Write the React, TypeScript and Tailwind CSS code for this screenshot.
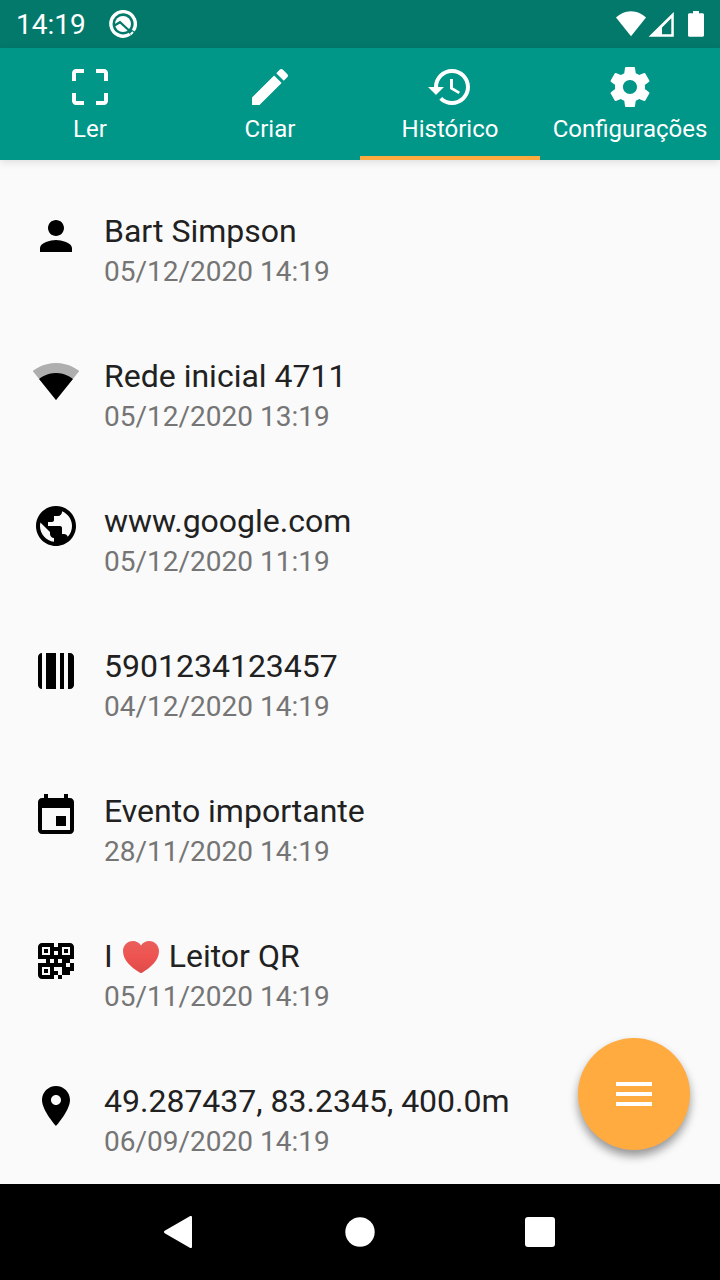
import { useState, type ReactNode } from "react";

const tabs = [
  {
    label: "Ler",
    path: "M3 5v4h2V5h4V3H5c-1.1 0-2 .9-2 2zm2 10H3v4c0 1.1.9 2 2 2h4v-2H5v-4zm14 4h-4v2h4c1.1 0 2-.9 2-2v-4h-2v4zm0-16h-4v2h4v4h2V5c0-1.1-.9-2-2-2z",
  },
  {
    label: "Criar",
    path: "M3 17.25V21h3.75L17.81 9.94l-3.75-3.75L3 17.25zM20.71 7.04c.39-.39.39-1.02 0-1.41l-2.34-2.34c-.39-.39-1.02-.39-1.41 0l-1.83 1.83 3.75 3.75 1.83-1.83z",
  },
  {
    label: "Histórico",
    path: "M13 3c-4.97 0-9 4.03-9 9H1l3.89 3.89.07.14L9 12H6c0-3.87 3.13-7 7-7s7 3.13 7 7-3.13 7-7 7c-1.93 0-3.68-.79-4.94-2.06l-1.42 1.42C8.27 19.99 10.51 21 13 21c4.97 0 9-4.03 9-9s-4.03-9-9-9zm-1 5v5l4.28 2.54.72-1.21-3.5-2.08V8H12z",
  },
  {
    label: "Configurações",
    path: "M19.43 12.98c.04-.32.07-.64.07-.98s-.03-.66-.07-.98l2.11-1.65c.19-.15.24-.42.12-.64l-2-3.46c-.12-.22-.39-.3-.61-.22l-2.49 1c-.52-.4-1.08-.73-1.69-.98l-.38-2.65C14.46 2.18 14.25 2 14 2h-4c-.25 0-.46.18-.49.42l-.38 2.65c-.61.25-1.17.59-1.69.98l-2.49-1c-.23-.09-.49 0-.61.22l-2 3.46c-.13.22-.07.49.12.64l2.11 1.65c-.04.32-.07.65-.07.98s.03.66.07.98l-2.11 1.65c-.19.15-.24.42-.12.64l2 3.46c.12.22.39.3.61.22l2.49-1c.52.4 1.08.73 1.69.98l.38 2.65c.03.24.24.42.49.42h4c.25 0 .46-.18.49-.42l.38-2.65c.61-.25 1.17-.59 1.69-.98l2.49 1c.23.09.49 0 .61-.22l2-3.46c.12-.22.07-.49-.12-.64l-2.11-1.65zM12 15.5c-1.93 0-3.5-1.57-3.5-3.5s1.57-3.5 3.5-3.5 3.5 1.57 3.5 3.5-1.57 3.5-3.5 3.5z",
  },
];

function Icon({ children }: { children: ReactNode }) {
  return (
    <svg viewBox="0 0 24 24" className="size-12 shrink-0" fill="currentColor" aria-hidden="true">
      {children}
    </svg>
  );
}

function Heart() {
  return (
    <svg viewBox="0 0 36 32" className="mx-2.5 mt-0.5 inline-block h-8 w-9" role="img" aria-label="❤️">
      <defs>
        <linearGradient id="heart" x1="0" y1="0" x2="0" y2="1">
          <stop offset="0" stopColor="#e9605b" />
          <stop offset="0.5" stopColor="#ee5350" />
          <stop offset="1" stopColor="#dd4b49" />
        </linearGradient>
      </defs>
      <path
        fill="url(#heart)"
        d="M18 4.6C16.2 1.6 13.3 0 9.8 0 4.2 0 0 4.4 0 10.2c0 9.2 8.6 16.2 16.6 21.4.9.6 1.900.6 2.800 0C27.4 26.4 36 19.4 36 10.2 36 4.4 31.8 0 26.2 0 22.7 0 19.8 1.6 18 4.6z"
      />
    </svg>
  );
}

const entries: { id: string; title: ReactNode; date: string; icon: ReactNode }[] = [
  {
    id: "contact",
    title: "Bart Simpson",
    date: "05/12/2020 14:19",
    icon: (
      <path d="M12 12c2.21 0 4-1.79 4-4s-1.79-4-4-4-4 1.79-4 4 1.79 4 4 4zm0 2c-2.67 0-8 1.34-8 4v2h16v-2c0-2.66-5.33-4-8-4z" />
    ),
  },
  {
    id: "wifi",
    title: "Rede inicial 4711",
    date: "05/12/2020 13:19",
    icon: (
      <>
        <path
          fillOpacity="0.3"
          d="M12.01 21.49L23.64 7c-.45-.34-4.93-4-11.64-4C5.28 3 .81 6.66.36 7l11.63 14.49.01.01.01-.01z"
        />
        <path d="M3.53 10.95l8.46 10.54.01.01.01-.01 8.46-10.54C20.04 10.62 16.81 8 12 8c-4.81 0-8.04 2.62-8.47 2.95z" />
      </>
    ),
  },
  {
    id: "url",
    title: "www.google.com",
    date: "05/12/2020 11:19",
    icon: (
      <path d="M12 2C6.48 2 2 6.48 2 12s4.48 10 10 10 10-4.48 10-10S17.52 2 12 2zm-1 17.93c-3.95-.49-7-3.85-7-7.93 0-.62.08-1.21.21-1.79L9 15v1c0 1.1.9 2 2 2v1.93zm6.9-2.54c-.26-.81-1-1.39-1.9-1.39h-1v-3c0-.55-.45-1-1-1H8v-2h2c.55 0 1-.45 1-1V7h2c1.1 0 2-.9 2-2v-.41c2.93 1.19 5 4.06 5 7.41 0 2.08-.8 3.97-2.1 5.39z" />
    ),
  },
  {
    id: "barcode",
    title: "5901234123457",
    date: "04/12/2020 14:19",
    icon: <path d="M5 3v18c-1.1 0-2-.9-2-2V5c0-1.1.9-2 2-2zM7 3h5v18H7zM14 3h2v18h-2zM18 3h1c1.1 0 2 .9 2 2v14c0 1.1-.9 2-2 2h-1z" />,
  },
  {
    id: "event",
    title: "Evento importante",
    date: "28/11/2020 14:19",
    icon: (
      <path d="M17 12h-5v5h5v-5zM16 1v2H8V1H6v2H5c-1.11 0-1.99.9-1.99 2L3 19c0 1.1.89 2 2 2h14c1.1 0 2-.9 2-2V5c0-1.1-.9-2-2-2h-1V1h-2zm3 18H5V8h14v11z" />
    ),
  },
  {
    id: "text",
    title: (
      <>
        I<Heart />Leitor QR
      </>
    ),
    date: "05/11/2020 14:19",
    icon: (
      <>
        <path
          fillRule="evenodd"
          d="M5 3h6v8H3V5c0-1.1.9-2 2-2zM5 5v4h4V5zM13 3h6c1.1 0 2 .9 2 2v6h-8zM15 5v4h4V5zM3 13h8v8H5c-1.1 0-2-.9-2-2zM5 15v4h4v-4z"
        />
        <path d="M6 6h2v2H6zM16 6h2v2h-2zM6 16h2v2H6zM11 5h2v2h-2zM7 11h2v2H7zM11 9h2v4h-2zM15 11h4v2h-4zM11 13h6v2h-6zM19 13h2v4h-2zM15 15h4v4h-4zM11 17h2v2h-2zM13 19h2v2h-2z" />
      </>
    ),
  },
  {
    id: "location",
    title: "49.287437, 83.2345, 400.0m",
    date: "06/09/2020 14:19",
    icon: (
      <path d="M12 2C8.13 2 5 5.13 5 9c0 5.25 7 13 7 13s7-7.75 7-13c0-3.87-3.13-7-7-7zm0 9.5c-1.38 0-2.5-1.12-2.5-2.5s1.12-2.5 2.5-2.5 2.5 1.12 2.5 2.5-1.12 2.5-2.5 2.5z" />
    ),
  },
];

function StatusBar() {
  return (
    <div className="flex h-12 shrink-0 items-center bg-[#03796b] px-4 text-white">
      <span className="pt-0.5 text-[28px] leading-8">14:19</span>
      <svg viewBox="0 0 28 28" className="ml-[23px] size-7" fill="none" aria-hidden="true">
        <path d="M20.8 24.1A12.2 12.2 0 1 1 24.3 20.6" stroke="#fff" strokeWidth="3.4" />
        <circle cx="14" cy="14" r="8" fill="#fff" />
        <path d="M5 15.8L11 12.2l11 10" stroke="#03796b" strokeWidth="2.2" />
        <path d="M19.5 19.5l5 5" stroke="#03796b" strokeWidth="2" />
        <path d="M21.5 24.5l2.5-2.5" stroke="#fff" strokeWidth="2" />
      </svg>
      <svg viewBox="0 0 90 28" className="ml-auto h-7 w-[90px]" fill="#fff" aria-hidden="true">
        <path d="M2 7.5C6 4 11 1.2 17 1.2S28 4 32 7.5L17 26.3z" />
        <path fillRule="evenodd" d="M59.8 2v24.7H34.6zM57.3 8.3L48 17.6v6.6h9.3z" />
        <path d="M79 1h6v2.3h3.5c.8 0 1.5.7 1.5 1.5v20.4c0 .8-.7 1.5-1.5 1.5h-13c-.8 0-1.5-.7-1.5-1.5V4.8c0-.8.7-1.5 1.5-1.5H79z" />
      </svg>
    </div>
  );
}

function SystemNav() {
  return (
    <nav aria-label="Sistema" className="flex h-24 shrink-0 items-center justify-center gap-[132px] bg-black text-white">
      <button type="button" aria-label="Voltar" className="size-12">
        <svg viewBox="0 0 48 48" className="size-12" fill="currentColor" aria-hidden="true">
          <path d="M8.7 22.8L33.8 8.3c1.3-.8 2.200-.2 2.200 1v29.4c0 1.200-.9 1.8-2.200 1L8.7 25.2c-1-.6-1-1.8 0-2.4z" />
        </svg>
      </button>
      <button type="button" aria-label="Início" className="size-12">
        <svg viewBox="0 0 48 48" className="size-12" fill="currentColor" aria-hidden="true">
          <circle cx="24" cy="24" r="14.7" />
        </svg>
      </button>
      <button type="button" aria-label="Recentes" className="size-12">
        <svg viewBox="0 0 48 48" className="size-12" fill="currentColor" aria-hidden="true">
          <rect x="9" y="9" width="30" height="30" rx="3" />
        </svg>
      </button>
    </nav>
  );
}

export default function App() {
  const [active, setActive] = useState("Histórico");

  return (
    <div className="flex h-screen flex-col overflow-hidden bg-[#fafafa] font-[Roboto,sans-serif]">
      <StatusBar />
      <div role="tablist" className="z-10 grid h-28 shrink-0 grid-cols-4 bg-[#009688] text-white shadow-[0_2px_8px_rgba(0,0,0,0.12)]">
        {tabs.map((tab) => (
          <button
            key={tab.label}
            type="button"
            role="tab"
            aria-selected={active === tab.label}
            onClick={() => setActive(tab.label)}
            className={`flex flex-col items-center border-b-4 pt-[15px] ${
              active === tab.label ? "border-[#ffab40]" : "border-transparent"
            }`}
          >
            <Icon>
              <path d={tab.path} />
            </Icon>
            <span className="text-2xl leading-9 whitespace-nowrap">{tab.label}</span>
          </button>
        ))}
      </div>
      <main className="relative flex min-h-0 flex-1 flex-col">
        <ul className="min-h-0 flex-1 overflow-y-auto pt-[18px] [scrollbar-width:none]">
          {entries.map((entry) => (
            <li key={entry.id} className="flex items-start gap-6 px-8 pt-8 pb-[30px] text-black">
              <div className="pt-0.5">
                <Icon>{entry.icon}</Icon>
              </div>
              <div className="min-w-0 flex-1">
                <p className="flex h-[41px] items-center text-[32px] leading-10 text-[#212121]">{entry.title}</p>
                <p className="text-[28px] leading-[42px] text-[#757575]">{entry.date}</p>
              </div>
            </li>
          ))}
        </ul>
        <button
          type="button"
          aria-label="Menu"
          className="absolute right-[30px] bottom-[34px] flex size-28 items-center justify-center rounded-full bg-[#ffab40] text-white shadow-[0_6px_10px_rgba(0,0,0,0.4)]"
        >
          <Icon>
            <path d="M3 18h18v-2H3v2zm0-5h18v-2H3v2zm0-7v2h18V6H3z" />
          </Icon>
        </button>
      </main>
      <SystemNav />
    </div>
  );
}
